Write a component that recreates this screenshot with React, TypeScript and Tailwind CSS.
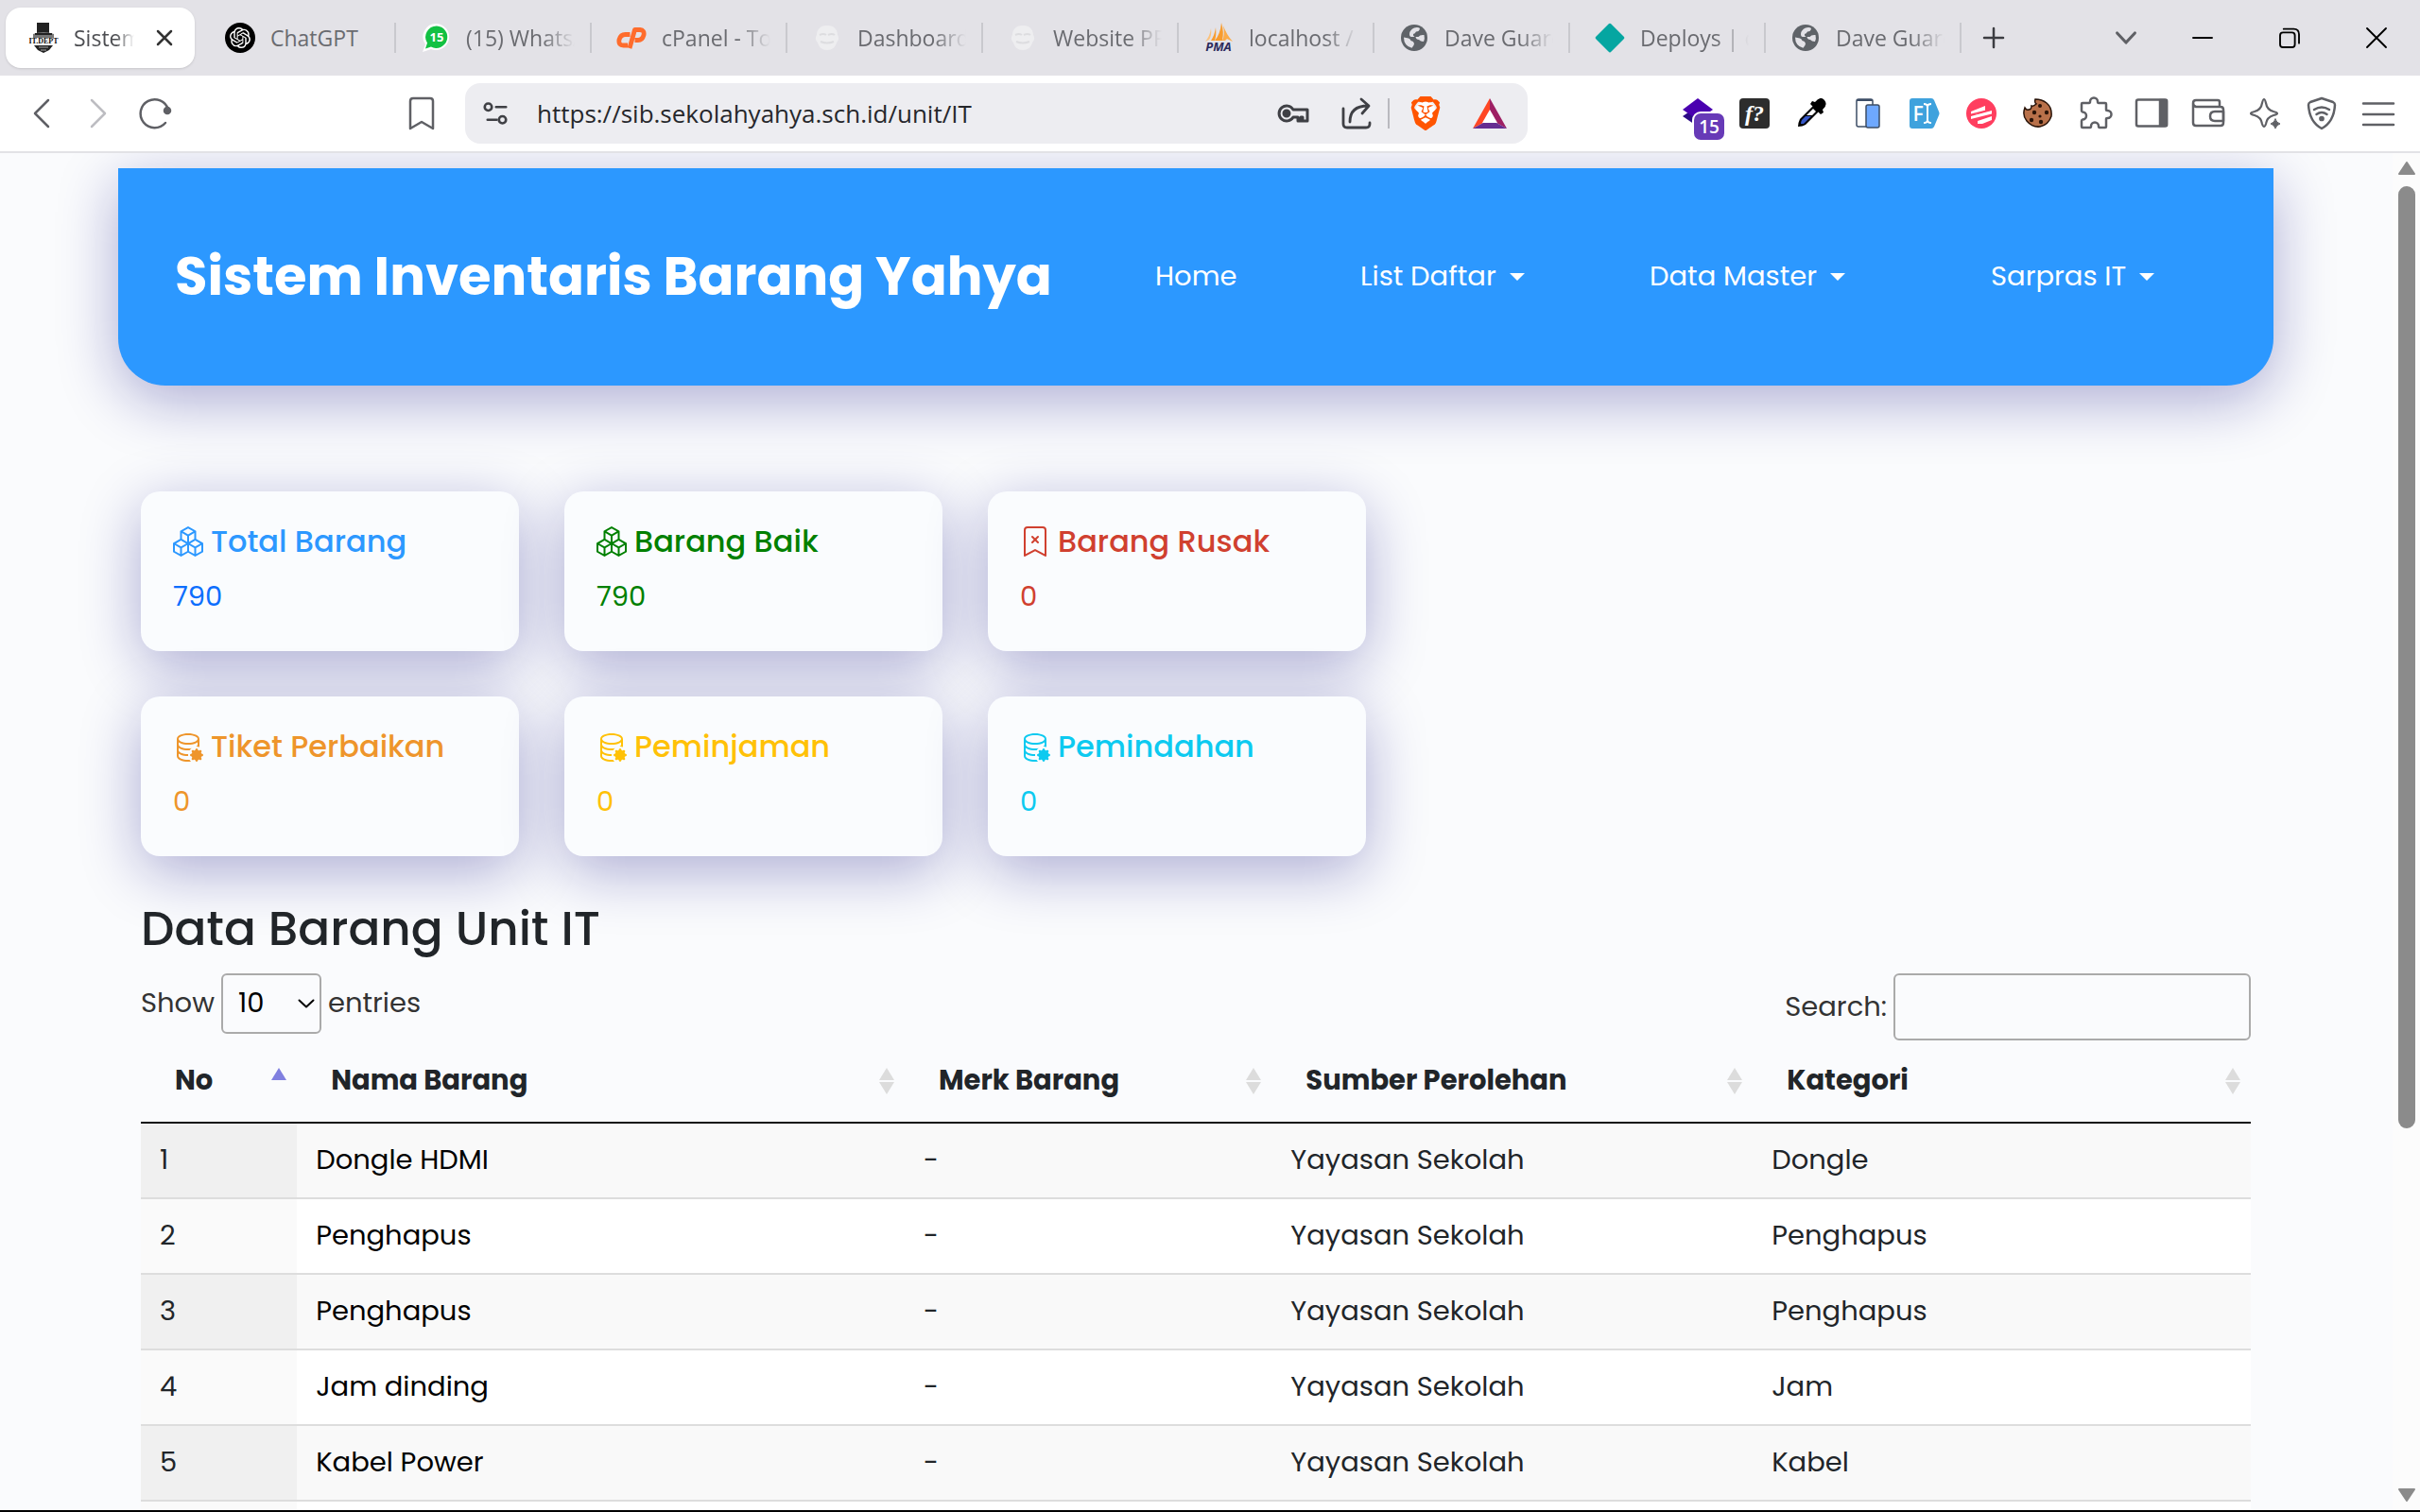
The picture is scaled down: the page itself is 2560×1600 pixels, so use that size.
import React, { useState } from "react";
import { BsBookmarkX, BsBoxes, BsDatabaseGear } from "react-icons/bs";
import { SiBrave, SiOpenai } from "react-icons/si";

type Tab = { title: string; icon: React.ReactNode };

type Item = {
  no: number;
  nama: string;
  merk: string;
  sumber: string;
  kategori: string;
};

const items: Item[] = [
  { no: 1, nama: "Dongle HDMI", merk: "-", sumber: "Yayasan Sekolah", kategori: "Dongle" },
  { no: 2, nama: "Penghapus", merk: "-", sumber: "Yayasan Sekolah", kategori: "Penghapus" },
  { no: 3, nama: "Penghapus", merk: "-", sumber: "Yayasan Sekolah", kategori: "Penghapus" },
  { no: 4, nama: "Jam dinding", merk: "-", sumber: "Yayasan Sekolah", kategori: "Jam" },
  { no: 5, nama: "Kabel Power", merk: "-", sumber: "Yayasan Sekolah", kategori: "Kabel" },
];

const columns = ["No", "Nama Barang", "Merk Barang", "Sumber Perolehan", "Kategori"];

const cards = [
  { title: "Total Barang", value: 790, Icon: BsBoxes, titleColor: "text-[#2c98ff]", valueColor: "text-[#0d6efd]" },
  { title: "Barang Baik", value: 790, Icon: BsBoxes, titleColor: "text-[#008000]", valueColor: "text-[#008000]" },
  { title: "Barang Rusak", value: 0, Icon: BsBookmarkX, titleColor: "text-[#d0402f]", valueColor: "text-[#d0402f]" },
  { title: "Tiket Perbaikan", value: 0, Icon: BsDatabaseGear, titleColor: "text-[#ee952b]", valueColor: "text-[#ee952b]" },
  { title: "Peminjaman", value: 0, Icon: BsDatabaseGear, titleColor: "text-[#ffc107]", valueColor: "text-[#ffc107]" },
  { title: "Pemindahan", value: 0, Icon: BsDatabaseGear, titleColor: "text-[#0dcaf0]", valueColor: "text-[#0dcaf0]" },
];

// Favicons
const ItDeptIcon = () => (
  <svg viewBox="0 0 32 32" className="size-8 overflow-visible">
    <path d="M9 0h13v11H9z" fill="#222" />
    <path d="M5 12q11-4 22 0v4H5z" fill="#777" />
    <path d="M7 11h18v2H7z" fill="#222" />
    <text x="16" y="22" textAnchor="middle" fontSize="8" fontWeight="900" fontFamily="Liberation Serif, serif" fill="#111">
      IT.DEPT
    </text>
    <path d="M6 24h20l-4 5-6 3-6-3z" fill="#222" />
    <path d="M11 26h10M13 29h6" stroke="#aaa" strokeWidth="1" />
  </svg>
);

const ChatGptIcon = () => (
  <span className="flex size-8 items-center justify-center rounded-full bg-black text-white">
    <SiOpenai className="size-[22px]" />
  </span>
);

const WhatsAppIcon = () => (
  <svg viewBox="0 0 32 32" className="size-8">
    <path d="M17 1a14 14 0 1 1-6 27L2 31l3-8A14 14 0 0 1 17 1z" fill="#fff" />
    <path d="M17 3.500a11.700 11.700 0 1 1-6 22l-6 2 2-6A11.700 11.700 0 0 1 17 3.500z" fill="#12c143" />
    <text x="17" y="20" textAnchor="middle" fontSize="13" fontWeight="700" fontFamily="Open Sans, sans-serif" fill="#fff">
      15
    </text>
  </svg>
);

const CpanelIcon = () => (
  <svg viewBox="0 0 32 32" className="size-8" fill="none" stroke="#ff6c2c" strokeWidth="4.800" strokeLinejoin="round">
    <path d="M14.500 12.500H9.500q-5 0-6.500 5.500-1 6 4.500 6H12" />
    <path d="M14 27L19.500 7.500H25q5 .5 4 5.500-1.500 5.500-6 5.500h-3.500" />
  </svg>
);

const FaintIcon = () => (
  <svg viewBox="0 0 32 32" className="size-8">
    <path d="M16 3c8 0 11 5 11 10 2 3 1 6-1 8-1 5-5 8-10 8s-9-3-10-8c-2-2-3-5-1-8C5 8 8 3 16 3z" fill="#eeeef0" />
    <path d="M8 13q4-2 7 0m2 0q4-2 7 0M9 20q7 3 14 0" stroke="#dddde0" strokeWidth="2" fill="none" />
  </svg>
);

const PmaIcon = () => (
  <svg viewBox="0 0 32 32" className="size-8 overflow-visible">
    <path d="M8 6q1 8-2 12l-4 2Q7 14 8 6z" fill="#fbc27c" />
    <path d="M13 5q1 8-1 14H8q4-6 5-14z" fill="#f89c2e" />
    <path d="M19 0q3 10 1 19h-8Q18 12 19 0z" fill="#f89c2e" />
    <path d="M21 3q3 9 10 17l-6-3-2 2h-3q3-6 1-16z" fill="#fbac4a" />
    <text x="16" y="30" textAnchor="middle" fontSize="13" fontWeight="700" fontStyle="italic" fontFamily="Open Sans, sans-serif" fill="#2d2b5c">
      PMA
    </text>
  </svg>
);

const GlobeIcon = () => (
  <svg viewBox="0 0 28 28" className="size-7">
    <circle cx="14" cy="14" r="14" fill="#5f6368" />
    <path
      d="M14 3.500q4-1 6 .5-.5 3.500-4 3.500-1 2-3 2.500-.5 2 1.500 3h4q1.500-2.500 6-2 1 4-.5 7-3.500 0-5-2-3 0-3.500-3H11q-2 0-2-3Q9 6 14 3.500z"
      fill="#e3e2e7"
    />
    <path d="M3 13.500l5 1q2 .5 2.500 2.500 3 .5 3.500 3 0 2.500-2.500 4.800Q3 22.500 3 13.500z" fill="#e3e2e7" />
  </svg>
);

const DiamondIcon = () => (
  <svg viewBox="0 0 32 32" className="size-8">
    <path d="M14.500 1.600a2 2 0 0 1 3 0l13 13a2 2 0 0 1 0 3l-13 13a2 2 0 0 1-3 0l-13-13a2 2 0 0 1 0-3z" fill="#05a6a1" />
  </svg>
);

const tabs: Tab[] = [
  { title: "ChatGPT", icon: <ChatGptIcon /> },
  { title: "(15) WhatsApp", icon: <WhatsAppIcon /> },
  { title: "cPanel - Tools", icon: <CpanelIcon /> },
  { title: "Dashboard", icon: <FaintIcon /> },
  { title: "Website PPDB", icon: <FaintIcon /> },
  { title: "localhost / 127", icon: <PmaIcon /> },
  { title: "Dave Guard", icon: <GlobeIcon /> },
  { title: "Deploys | dave", icon: <DiamondIcon /> },
  { title: "Dave Guard", icon: <GlobeIcon /> },
];

// Stroked icon on a 32px grid
function Line({ children, className = "size-8", width = 2.5 }: { children: React.ReactNode; className?: string; width?: number }) {
  return (
    <svg
      viewBox="0 0 32 32"
      fill="none"
      stroke="currentColor"
      strokeWidth={width}
      strokeLinecap="round"
      strokeLinejoin="round"
      className={`overflow-visible ${className}`}
    >
      {children}
    </svg>
  );
}

const extensions: Tab[] = [
  {
    title: "Diamond extension",
    icon: (
      <svg viewBox="0 0 32 32" className="size-8 overflow-visible">
        <path d="M16 8l16 11-16 11L0 19z" fill="#2c0a86" />
        <path d="M16 0l16 12-16 11L0 12z" fill="#4a00b0" />
        <rect x="10" y="14" width="36" height="32" rx="9" fill="#fff" />
        <rect x="12" y="16" width="32" height="28" rx="7" fill="#673ab7" />
        <text x="28" y="37" textAnchor="middle" fontSize="19" fontWeight="600" fontFamily="Open Sans, sans-serif" fill="#fff">
          15
        </text>
      </svg>
    ),
  },
  {
    title: "Font finder",
    icon: (
      <svg viewBox="0 0 32 32" className="size-8">
        <rect width="32" height="32" rx="4" fill="#2d2d2d" />
        <text x="16" y="24" textAnchor="middle" fontSize="24" fontWeight="700" fontStyle="italic" fontFamily="Liberation Serif, serif" fill="#fff">
          f?
        </text>
      </svg>
    ),
  },
  {
    title: "Color picker",
    icon: (
      <svg viewBox="0 0 32 32" className="size-8">
        <path d="M20 4q6-7 10-2t-2 10l1 3-3 2L15 6l2-3z" fill="#000" />
        <path d="M18 8L4 22q-2 4-2 8 5 0 8-2l14-14z" fill="#000" />
        <path d="M18 11l3 3-4 4h-6z" fill="#fff" />
        <path d="M10 19h6l-8 8H5q0-2 1-4z" fill="#3657c8" />
      </svg>
    ),
  },
  {
    title: "Device preview",
    icon: (
      <svg viewBox="0 0 32 32" className="size-8">
        <rect x="4" y="1" width="17" height="29" rx="2" fill="#fff" stroke="#3d4d66" strokeWidth="1.500" />
        <path d="M4 3q0-2 2-2h13q2 0 2 2z" fill="#3d4d66" />
        <rect x="14" y="7" width="14" height="24" rx="2" fill="#6ea8fe" stroke="#3d4d66" strokeWidth="1.500" />
      </svg>
    ),
  },
  {
    title: "Form filler",
    icon: (
      <svg viewBox="0 0 32 32" className="size-8">
        <path d="M3 0h20q2 0 3 2l5 12q1 2 0 4l-5 12q-1 2-3 2H3q-3 0-3-3V3q0-3 3-3z" fill="#3fa2dd" />
        <text x="9" y="24" textAnchor="middle" fontSize="21" fontWeight="600" fontFamily="Open Sans, sans-serif" fill="#fff">
          F
        </text>
        <path d="M15 6q4 0 4 3v14q0 3-4 3M23 6q-4 0-4 3v14q0 3 4 3" stroke="#fff" strokeWidth="2" fill="none" />
      </svg>
    ),
  },
  {
    title: "Responsive viewer",
    icon: (
      <svg viewBox="0 0 32 32" className="size-8">
        <circle cx="16" cy="16" r="16" fill="#ff3e5f" />
        <path d="M5 14l15-6v5L10 17H5zM5 19l22-6v4L10 22H5zM12 24l15-5v4l-10 4h-5z" fill="#fff" />
        <path d="M4 17.500l24-6M4 23l24-6" stroke="#ff3e5f" strokeWidth="1.500" />
      </svg>
    ),
  },
  {
    title: "Cookies",
    icon: (
      <svg viewBox="0 0 32 32" className="size-8">
        <path
          d="M13 1q-1 4 1 5-3 3-5 2 0 4-3 4-2 1-4-2-3 8 2 14 6 7 14 6 9-2 12-11 1-9-5-14-5-4-12-4z"
          fill="#b9714a"
          stroke="#2a1409"
          strokeWidth="1.500"
        />
        <g fill="#2a1409">
          <circle cx="18" cy="8" r="2" />
          <circle cx="25" cy="15" r="2.200" />
          <circle cx="12" cy="15" r="2.200" />
          <circle cx="18" cy="19" r="1.600" />
          <circle cx="9" cy="23" r="2.200" />
          <circle cx="19" cy="25" r="2.200" />
        </g>
      </svg>
    ),
  },
  {
    title: "Extensions",
    icon: (
      <Line>
        <path d="M3 5h7q1 0 1-1.500A4 4 0 0 1 19 3.500q0 1.500 1 1.500h7q1 0 1 1v6q0 1 1.500 1a4 4 0 0 1 0 8q-1.500 0-1.500 1v8q0 1-1 1h-6q-1 0-1-1.500a4 4 0 0 0-8 0q0 1.500-1 1.500H3q-1 0-1-1v-6q0-1 1-1.500a4 4 0 0 0 0-8q-1-.5-1-1.500V6q0-1 1-1z" />
      </Line>
    ),
  },
  {
    title: "Side panel",
    icon: (
      <Line>
        <rect x="0" y="1.500" width="32" height="28" rx="2" />
        <path d="M25 2h7v27h-7z" fill="currentColor" />
      </Line>
    ),
  },
  {
    title: "Wallet",
    icon: (
      <Line>
        <path d="M28 9V4q0-2-2-2H3Q0 2 0 5v21q0 3 3 3h26q3 0 3-3V12q0-3-3-3H3Q0 8 0 5" />
        <path d="M32 14h-9q-5 0-5 5t5 5h9z" />
      </Line>
    ),
  },
  {
    title: "Leo AI",
    icon: (
      <Line width={2.2}>
        <path d="M15 1q1 0 2 4 1 7 8 9 4 1 4 2t-4 2q-7 2-8 9-1 3-2 3t-2-3q-1-7-8-9-4-1-4-2t4-2q7-2 8-9 1-4 2-4z" />
        <path d="M27 22q1 4 5 5-4 1-5 5-1-4-5-5 4-1 5-5z" fill="currentColor" strokeWidth="1" />
      </Line>
    ),
  },
  {
    title: "VPN",
    icon: (
      <Line>
        <path d="M16 0l12 4q2 1 2 3-1 18-14 25Q3 25 2 7q0-2 2-3z" />
        <path d="M8 12q8-5 16 0M10.500 17q5.500-4 11 0" />
        <circle cx="16" cy="21.500" r="1.600" fill="currentColor" />
      </Line>
    ),
  },
  {
    title: "Menu",
    icon: (
      <Line>
        <path d="M0 5.500h32M0 17h32M0 28h32" />
      </Line>
    ),
  },
];

function TabStrip() {
  return (
    <div className="flex h-20 items-center bg-[#e3e2e7] pl-[6px] text-[23px] text-[#6a6b70]">
      <div className="mr-[6px] flex h-16 w-[200px] items-center gap-4 rounded-2xl bg-white pr-4 pl-6 text-[#4d4e52] shadow-sm">
        <ItDeptIcon />
        <span className="flex-1 overflow-hidden whitespace-nowrap [mask-image:linear-gradient(to_right,black_70%,transparent)]">
          Sistem
        </span>
        <button aria-label="Close tab" className="p-2 text-[#333]">
          <Line className="size-4" width={5}>
            <path d="M2 2l28 28M30 2L2 30" />
          </Line>
        </button>
      </div>
      {tabs.map((tab, i) => (
        <div key={i} className="flex h-8 w-[207px] items-center gap-4 border-r-2 border-[#c9c9ce] pr-4 pl-[26px]">
          <span className="flex size-8 shrink-0 items-center justify-center">{tab.icon}</span>
          <span
            className={
              i === 0
                ? "flex-1 whitespace-nowrap"
                : "flex-1 overflow-hidden whitespace-nowrap [mask-image:linear-gradient(to_right,black_70%,transparent)]"
            }
          >
            {tab.title}
          </span>
        </div>
      ))}
      <button aria-label="New tab" className="ml-6 text-[#3c3d42]">
        <Line className="size-5" width={4}>
          <path d="M16 0v32M0 16h32" />
        </Line>
      </button>
      <button aria-label="Search tabs" className="mr-[61px] ml-auto text-[#5f6065]">
        <Line className="size-5" width={5}>
          <path d="M1 8l15 16L31 8" />
        </Line>
      </button>
      <div className="flex items-center gap-[72px] pr-9 text-black">
        <button aria-label="Minimize">
          <Line className="size-5" width={3}>
            <path d="M0 16h32" />
          </Line>
        </button>
        <button aria-label="Restore">
          <Line className="size-5" width={3}>
            <rect x="0" y="7" width="25" height="25" rx="5" />
            <path d="M6 1h17q9 0 9 9v15" />
          </Line>
        </button>
        <button aria-label="Close">
          <Line className="size-5" width={3}>
            <path d="M0 0l32 32M32 0L0 32" />
          </Line>
        </button>
      </div>
    </div>
  );
}

function Toolbar() {
  return (
    <div className="flex h-[82px] items-center border-b-2 border-[#e2e2e6] bg-white px-7 text-[#5f6065]">
      <div className="flex items-center gap-7">
        <button aria-label="Back">
          <Line>
            <path d="M23 2L9 16l14 14" />
          </Line>
        </button>
        <button aria-label="Forward" className="text-[#bdbdc2]">
          <Line>
            <path d="M9 2l14 14L9 30" />
          </Line>
        </button>
        <button aria-label="Reload">
          <Line>
            <path d="M27 26A15 15 0 1 1 30 12" />
            <circle cx="29" cy="13" r="3" fill="currentColor" />
          </Line>
        </button>
      </div>
      <div className="grow-[250]" />
      <button aria-label="Bookmark" className="mr-[30px]">
        <Line>
          <path d="M4 32V3q0-3 3-3h18q3 0 3 3v29l-12-7z" />
        </Line>
      </button>
      <div className="flex h-16 shrink-0 grow-[1084] basis-0 items-center rounded-2xl bg-[#ededf1] px-5 text-[#3f4045]">
        <Line className="size-6" width={3.5}>
          <circle cx="6" cy="7" r="5" />
          <path d="M17 7h14M5 25h13" />
          <circle cx="26" cy="25" r="5" />
        </Line>
        <input
          aria-label="Address"
          defaultValue="https://sib.sekolahyahya.sch.id/unit/IT"
          className="ml-8 min-w-0 flex-1 bg-transparent text-[26px] text-[#26272b] outline-none"
        />
        <button aria-label="Passwords">
          <Line width={3}>
            <path d="M16 12A8 8 0 1 0 16 20h5v4h3v-4h2v4h5V12z" />
            <circle cx="9" cy="16" r="3" fill="currentColor" />
          </Line>
        </button>
        <button aria-label="Share" className="ml-9">
          <Line width={2.8}>
            <path d="M1 11v16q0 4 4 4h20q4 0 4-4v-1" />
            <path d="M8 25Q8 8 27 8M20 1l8 7-7 8" />
          </Line>
        </button>
        <span className="mx-4 h-8 w-[2px] bg-[#b9b9bf]" />
        <button aria-label="Brave Shields" className="ml-1 grid place-items-center">
          <span className="col-start-1 row-start-1 h-6 w-5 rounded-lg bg-white" />
          <SiBrave className="col-start-1 row-start-1 size-9 text-[#ff5500]" />
        </button>
        <button aria-label="Brave Rewards" className="ml-8 mr-[2px]">
          <svg viewBox="0 0 36 32" className="h-8 w-9">
            <path d="M18 0L0 32l11-6 7-13z" fill="#ff4724" />
            <path d="M18 0l18 32-11-6-7-13z" fill="#9e1f63" />
            <path d="M0 32h36l-11-6H11z" fill="#662d91" />
            <path d="M18 12l8 14H10z" fill="#fff" />
          </svg>
        </button>
      </div>
      <div className="grow-[164]" />
      <div className="flex items-center gap-7">
        {extensions.map((ext) => (
          <button key={ext.title} aria-label={ext.title}>
            {ext.icon}
          </button>
        ))}
      </div>
    </div>
  );
}

const Caret = () => <span className="border-x-8 border-t-8 border-x-transparent border-t-white" />;

function Navbar() {
  return (
    <header className="grid h-[230px] grid-cols-[1037fr_1183fr] items-center rounded-b-[50px] bg-[#2c98ff] pl-[60px] text-white shadow-[0_16px_64px_rgba(13,13,128,0.33)]">
      <a href="#" className="text-[56px] font-bold whitespace-nowrap">
        Sistem Inventaris Barang Yahya
      </a>
      <nav className="grid grid-cols-[217fr_306fr_361fr_299fr] text-[29px]">
        <a href="#">Home</a>
        {["List Daftar", "Data Master", "Sarpras IT"].map((label) => (
          <a key={label} href="#" className="flex items-center gap-[14px]">
            {label}
            <Caret />
          </a>
        ))}
      </nav>
    </header>
  );
}

function SortIcon({ active }: { active: boolean }) {
  return (
    <svg viewBox="0 0 16 28" className="h-7 w-4">
      <path d="M8 0l8 13H0z" fill={active ? "#8080e0" : "#dcdcdc"} />
      {!active && <path d="M8 28l8-13H0z" fill="#dcdcdc" />}
    </svg>
  );
}

function ItemTable() {
  return (
    <table className="w-full table-fixed border-separate border-spacing-0 text-left text-[29px] text-[#212529]">
      <colgroup>
        <col className="w-[7.4%]" />
        <col className="w-[28.8%]" />
        <col className="w-[17.4%]" />
        <col className="w-[22.8%]" />
        <col />
      </colgroup>
      <thead>
        <tr>
          {columns.map((name, i) => (
            <th key={name} className="h-[88px] border-b-2 border-[#111] pr-[11px] pl-9 font-bold">
              <div className="flex items-center justify-between">
                {name}
                <SortIcon active={i === 0} />
              </div>
            </th>
          ))}
        </tr>
      </thead>
      <tbody>
        {items.map((item) => (
          <tr key={item.no} className="group odd:bg-[#f9f9f9] even:bg-white">
            <td className="h-20 border-b-2 border-[#dddddd] px-5 group-odd:bg-[#f0f0f0] group-even:bg-[#fafafa]">
              {item.no}
            </td>
            <td className="border-b-2 border-[#dddddd] px-5 text-black">{item.nama}</td>
            <td className="border-b-2 border-[#dddddd] px-5">{item.merk}</td>
            <td className="border-b-2 border-[#dddddd] px-5">{item.sumber}</td>
            <td className="border-b-2 border-[#dddddd] px-5">{item.kategori}</td>
          </tr>
        ))}
        <tr className="bg-white">
          <td className="h-20 bg-[#fafafa]" />
          <td colSpan={4} />
        </tr>
      </tbody>
    </table>
  );
}

export default function App() {
  const [pageSize, setPageSize] = useState("10");
  const [search, setSearch] = useState("");

  return (
    <div className="flex h-screen flex-col overflow-hidden border-b-2 border-black bg-[#fafbfd] font-['Open_Sans',sans-serif]">
      <TabStrip />
      <Toolbar />

      <div className="flex min-h-0 flex-1">
        <main className="min-w-0 flex-1 overflow-hidden pt-4 pr-[126px] pl-[125px] font-[Poppins,Inter,sans-serif]">
          <Navbar />

          <div className="px-6">
            {/* Summary cards */}
            <div className="mt-28 grid w-[1296px] max-w-full grid-cols-3 gap-12">
              {cards.map(({ title, value, Icon, titleColor, valueColor }) => (
                <div
                  key={title}
                  className="h-[169px] rounded-[20px] bg-[#fafcfe] px-[34px] pt-8 shadow-[0_16px_64px_rgba(13,13,128,0.33)]"
                >
                  <h5 className={`flex items-center gap-2 text-[32px] leading-[42px] font-medium whitespace-nowrap ${titleColor}`}>
                    <Icon className="size-8" />
                    {title}
                  </h5>
                  <p className={`mt-4 text-[29px] leading-[42px] ${valueColor}`}>{value}</p>
                </div>
              ))}
            </div>

            <h2 className="mt-[46px] text-[50px] leading-[62px] font-medium text-[#212529]">Data Barang Unit IT</h2>

            {/* Table controls */}
            <div className="mt-4 flex items-start justify-between text-[29px] text-[#333]">
              <label className="flex h-16 items-center gap-[7px]">
                Show
                <span className="relative">
                  <select
                    value={pageSize}
                    onChange={(e) => setPageSize(e.target.value)}
                    className="block h-16 w-[106px] appearance-none rounded-md border-2 border-[#aaa] bg-transparent pl-4 text-black"
                  >
                    <option>10</option>
                    <option>25</option>
                    <option>50</option>
                    <option>100</option>
                  </select>
                  <Line className="pointer-events-none absolute top-6 right-2 size-4 text-black" width={4}>
                    <path d="M1 9l15 14L31 9" />
                  </Line>
                </span>
                entries
              </label>
              <label className="flex items-center gap-[7px]">
                Search:
                <input
                  type="search"
                  value={search}
                  onChange={(e) => setSearch(e.target.value)}
                  className="h-[71px] w-[378px] rounded-md border-2 border-[#aaa] bg-transparent px-3"
                />
              </label>
            </div>

            <ItemTable />
          </div>
        </main>

        {/* Scrollbar */}
        <div className="flex w-[29px] flex-col items-center bg-[#fcfcfc] py-[9px]">
          <svg viewBox="0 0 18 14" className="w-[18px]">
            <path d="M9 1l8 12H1z" fill="#8b8b8b" stroke="#8b8b8b" strokeWidth="2" strokeLinejoin="round" />
          </svg>
          <div className="my-3 w-[18px] flex-1">
            <div className="h-[73%] rounded-full bg-[#8b8b8b]" />
          </div>
          <svg viewBox="0 0 18 14" className="w-[18px]">
            <path d="M9 13l8-12H1z" fill="#8b8b8b" stroke="#8b8b8b" strokeWidth="2" strokeLinejoin="round" />
          </svg>
        </div>
      </div>
    </div>
  );
}
